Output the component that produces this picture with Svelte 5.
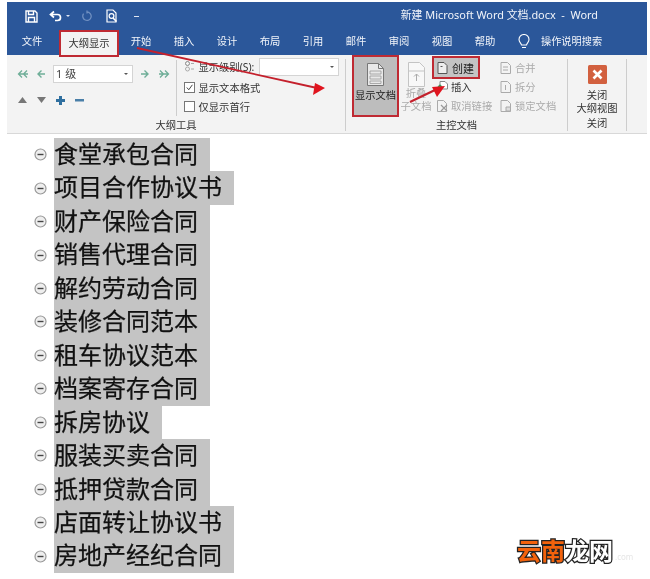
<script>
  const tabs = ['开始', '插入', '设计', '布局', '引用', '邮件', '审阅', '视图', '帮助'];
  const items = ['食堂承包合同', '项目合作协议书', '财产保险合同', '销售代理合同', '解约劳动合同', '装修合同范本', '租车协议范本', '档案寄存合同', '拆房协议', '服装买卖合同', '抵押贷款合同', '店面转让协议书', '房地产经纪合同'];
</script>

<div class="page">
  <header class="head">
    <div class="titlebar">
      <div class="qat">
        <svg class="i-save" viewBox="0 0 13 13"><path d="M1 1h9l2 2v9H1z M3.500 1v3.500h5V1 M3.500 12V7.500h6V12" fill="none" stroke="#fff" stroke-width="1.400"/></svg>
        <svg class="i-undo" viewBox="0 0 14 12"><path d="M5 1.500 1.500 4.500 5 7.500 M2 4.500h6.500a3 3 0 0 1 0 6H6" fill="none" stroke="#fff" stroke-width="1.700"/></svg>
        <span class="drop"></span>
        <svg class="i-redo" viewBox="0 0 11 12"><path d="M6 2a4.200 4.200 0 1 1-3.400 1.700M6 .5v3" fill="none" stroke="#6f8fc0" stroke-width="1.300"/></svg>
        <svg class="i-prev" viewBox="0 0 12 14"><path d="M1 1h6l3 3v9H1z" fill="none" stroke="#fff" stroke-width="1.200"/><circle cx="5.500" cy="7" r="2.400" fill="none" stroke="#fff" stroke-width="1.200"/><path d="M7 9l3.500 3.500" stroke="#fff" stroke-width="1.600"/></svg>
        <span class="more"></span>
      </div>
      <div class="doc">新建 Microsoft Word 文档.docx&nbsp; - &nbsp;Word</div>
    </div>
    <nav class="tabs">
      <span class="tab">文件</span>
      <span class="tab-active">大纲显示</span>
      {#each tabs as t}<span class="tab">{t}</span>{/each}
      <svg class="bulb" viewBox="0 0 12 16"><path d="M3.500 11C3 9 1 8.200 1 5.500a5 5 0 0 1 10 0C11 8.200 9 9 8.500 11zM4 13.500h4" fill="none" stroke="#fff" stroke-width="1.100"/></svg>
      <span class="search">操作说明搜索</span>
    </nav>
  </header>

  <section class="ribbon">
    <div class="group g-outline">
      <div class="body">
        <div class="ol-left">
          <div class="ol-row">
            <svg class="a-dbl" viewBox="0 0 12 8"><path d="M5 .5 1.500 4 5 7.500M10 .5 6.500 4l3.500 3.500M2 4h9" fill="none" stroke="#6fae98" stroke-width="1.300"/></svg>
            <svg class="a-one" viewBox="0 0 8 8"><path d="M4.500 .5 1 4l3.500 3.500M1.500 4H8" fill="none" stroke="#6fae98" stroke-width="1.400"/></svg>
            <div class="select"><span>1 级</span><i class="caret"></i></div>
            <svg class="a-one" viewBox="0 0 8 8"><path d="M3.500 .5 7 4 3.500 7.500M6.500 4H0" fill="none" stroke="#6fae98" stroke-width="1.400"/></svg>
            <svg class="a-dbl" viewBox="0 0 12 8"><path d="M2 .5 5.500 4 2 7.500M7 .5 10.500 4 7 7.500M1 4h9" fill="none" stroke="#6fae98" stroke-width="1.300"/></svg>
          </div>
          <div class="ol-row second">
            <svg class="tri" viewBox="0 0 9 6"><path d="M4.500 0 9 6H0z" fill="#777"/></svg>
            <svg class="tri" viewBox="0 0 9 6"><path d="M0 0h9L4.500 6z" fill="#777"/></svg>
            <svg class="tri-plus" viewBox="0 0 9 9"><path d="M3 0h3v3h3v3H6v3H3V6H0V3h3z" fill="#2f6f9f"/></svg>
            <svg class="tri-plus" viewBox="0 0 9 9"><path d="M0 3h9v2.500H0z" fill="#4a7fa8"/></svg>
          </div>
        </div>
        <div class="ol-right">
          <div class="opt first">
            <svg class="radio" viewBox="0 0 11 11"><circle cx="3.500" cy="2.500" r="2" fill="none" stroke="#888"/><circle cx="3.500" cy="8" r="2" fill="none" stroke="#aaa"/><path d="M7 2.500h3M7 8h3" stroke="#aaa"/></svg>
            <span>显示级别(S):</span>
            <div class="combo"><i class="caret"></i></div>
          </div>
          <div class="opt">
            <span class="check on"><svg viewBox="0 0 10 10"><path d="M2 5l2.200 2.500L8.200 2" fill="none" stroke="#444" stroke-width="1.100"/></svg></span>
            <span>显示文本格式</span>
          </div>
          <div class="opt"><span class="check"></span><span>仅显示首行</span></div>
        </div>
      </div>
      <div class="label">大纲工具</div>
    </div>

    <div class="group g-master">
      <div class="body">
        <div class="big-btn">
          <svg viewBox="0 0 17 23"><path d="M.5.500h11l5 5v17H.5z" fill="#e8e8e8" stroke="#777"/><path d="M11.500.500v5h5" fill="none" stroke="#777"/><path d="M3 8h11v3H3zM3 13h11v3H3zM3 18h11v2.500H3z" fill="none" stroke="#999" stroke-width=".8"/></svg>
          <span>显示文档</span>
        </div>
        <div class="fold-btn">
          <svg viewBox="0 0 17 25"><path d="M.5.500h11l5 5v19H.5z" fill="#f8f8f8" stroke="#c4c4c4"/><path d="M.5 9h16" stroke="#c4c4c4"/><path d="M8.500 19v-7M6 14.500l2.500-2.500 2.500 2.500" fill="none" stroke="#aaa"/></svg>
          <span>折叠<br />子文档</span>
        </div>
        <div class="col-a">
          <div class="create">
            <svg class="mini" viewBox="0 0 10 12"><path d="M.5.500h6l3 3v8h-9z M3 4.500h2" fill="#eee" stroke="#555"/></svg>
            <span>创建</span>
          </div>
          <div class="mrow">
            <svg class="mini" viewBox="0 0 11 12"><path d="M3 .5h5l2.500 2.500v5H3z" fill="#fff" stroke="#888"/><path d="M3 9v-5M1 6l2-2 2 2" fill="none" stroke="#3a9a5a" stroke-width="1.200"/></svg>
            <span>插入</span>
          </div>
          <div class="mrow off">
            <svg class="mini" viewBox="0 0 11 12"><path d="M.5.500h6l3 3v8h-9z" fill="none" stroke="#aaa"/><path d="M4 5l6 6M10 5l-6 6" stroke="#999" stroke-width="1.200"/></svg>
            <span>取消链接</span>
          </div>
        </div>
        <div class="col-b">
          <div class="mrow off">
            <svg class="mini" viewBox="0 0 11 12"><path d="M1 .5h6.500l3 3v8H1zM3 5h5M3 8h5" fill="none" stroke="#aaa"/></svg><span>合并</span>
          </div>
          <div class="mrow off">
            <svg class="mini" viewBox="0 0 11 12"><path d="M1 .5h6.500l3 3v8H1zM5.500 4v5" fill="none" stroke="#aaa"/></svg><span>拆分</span>
          </div>
          <div class="mrow off">
            <svg class="mini" viewBox="0 0 11 12"><path d="M1 .5h6.500l3 3v8H1z" fill="none" stroke="#aaa"/><path d="M6 7h4.500v4H6z" fill="#ddd" stroke="#aaa"/></svg><span>锁定文档</span>
          </div>
        </div>
      </div>
      <div class="label">主控文档</div>
    </div>

    <div class="group g-close">
      <div class="body close-body">
        <svg class="x" viewBox="0 0 19 19"><rect width="19" height="19" rx="1.500" fill="#d2603f"/><path d="M5.500 5.500l8 8M13.500 5.500l-8 8" stroke="#fff" stroke-width="2.600"/></svg>
        <span>关闭<br />大纲视图</span>
      </div>
      <div class="label">关闭</div>
    </div>
  </section>

  <ul class="list">
    {#each items as item}
      <li>
        <svg class="bullet" viewBox="0 0 13 13"><circle cx="6.500" cy="6.500" r="5.500" fill="#eee" stroke="#999" stroke-width="1.200"/><path d="M3.500 6.500h6" stroke="#444" stroke-width="1.400"/></svg>
        <span class="hl">{item}</span>
      </li>
    {/each}
  </ul>

  <svg class="marks" viewBox="0 0 650 579">
    <path d="M137 48 317 88" stroke="#c4202c" stroke-width="1.800"/>
    <path d="M325 88 315 83 313 95z" fill="#e0141e"/>
    <path d="M410 102 435 90" stroke="#c4202c" stroke-width="2.200"/>
    <path d="M432 87 445 86 437 97z" fill="#e0141e"/>
  </svg>

  <div class="wm"><b class="or">云南</b><b class="wh">龙网</b><small>.com</small></div>
</div>

<style>
  :global(body) { margin: 0; background: #fff; }
  .page { position: relative; width: 650px; height: 579px; overflow: hidden; background: #fff; font-family: "Noto Sans", "Noto Sans CJK SC", sans-serif; font-size: 10.300px; color: #333; filter: blur(.35px); }
  svg { display: block; flex: none; }
  .head { margin: 2px 3px 0 7px; height: 53px; background: #2b579a; color: #f2f5fa; }
  .titlebar { display: flex; align-items: center; height: 28px; padding-left: 18px; }
  .qat { display: flex; align-items: center; }
  .i-save { width: 13px; height: 13px; }
  .i-undo { width: 14px; height: 12px; margin-left: 11px; }
  .drop { border: 2px solid transparent; border-top: 2.500px solid #dfe6f2; border-bottom: 0; margin-left: 3px; }
  .i-redo { width: 11px; height: 12px; margin-left: 11px; }
  .i-prev { width: 12px; height: 14px; margin-left: 14px; }
  .more { width: 5px; border-top: 1px solid #dfe6f2; height: 0; margin-left: 16px; }
  .doc { margin-left: auto; margin-right: 49px; margin-bottom: 4px; font-size: 10.900px; }

  .tabs { display: flex; align-items: flex-start; height: 25px; padding-left: 4px; }
  .tab { width: 42px; margin-right: 1px; height: 24px; line-height: 23px; text-align: center; white-space: nowrap; }
  .tab-active { position: relative; z-index: 2; box-sizing: border-box; width: 60px; height: 27px; line-height: 23px; margin: 0 1px 0 5px; text-align: center; color: #333; background: #f3f3f3; border: 2px solid #bf2a33; }
  .bulb { width: 12px; height: 16px; margin: 4px 0 0 11px; }
  .search { margin-left: 11px; line-height: 23px; font-size: 10.200px; }

  .ribbon { display: flex; height: 78px; margin: 0 3px 0 7px; background: #f3f3f3; border-bottom: 1px solid #d8d8d8; }
  .group { display: flex; flex-direction: column; box-sizing: border-box; border-right: 1px solid #cdcdcd; border-image: linear-gradient(transparent 5px, #cdcdcd 5px, #cdcdcd calc(100% - 3px), transparent calc(100% - 3px)) 1; }
  .body { flex: 1; display: flex; }
  .label { height: 20px; line-height: 17px; text-align: center; color: #333; }
  .g-outline { width: 339px; }
  .g-master { width: 222px; }
  .g-close { width: 59px; }

  .ol-left { box-sizing: border-box; width: 170px; height: 56px; margin-top: 5px; padding: 5px 0 0 10px; border-right: 1px solid #cdcdcd; }
  .ol-row { display: flex; align-items: center; height: 18px; }
  .second { margin-top: 8px; gap: 10px; padding-left: 1px; }
  .a-dbl { width: 12px; height: 8px; }
  .a-one { width: 8px; height: 8px; margin: 0 8px; }
  .select, .combo { position: relative; box-sizing: border-box; height: 18px; background: #fff; border: 1px solid #d4d4d4; }
  .select { width: 80px; line-height: 16px; padding-left: 2px; color: #444; font-size: 11px; }
  .ol-row .select + .a-one { margin-left: 8px; margin-right: 9px; }
  .ol-row .a-one:nth-child(2) { margin-right: 8px; }
  .tri { width: 9px; height: 6px; }
  .tri-plus { width: 9px; height: 9px; }
  .caret { position: absolute; right: 4px; top: 7px; border: 2px solid transparent; border-top: 2.500px solid #555; border-bottom: 0; }

  .ol-right { padding: 3px 0 0 7px; }
  .opt { display: flex; align-items: center; height: 19.500px; }
  .opt.first { margin-top: -1px; margin-bottom: 1px; }
  .opt > span:not(.check) { margin-left: 3.500px; }
  .radio { width: 11px; height: 11px; }
  .combo { width: 80px; margin-left: 5px; }
  .check { box-sizing: border-box; width: 11px; height: 11px; background: #fff; border: 1px solid #777; }
  .check svg { width: 9px; height: 9px; }

  .big-btn { box-sizing: border-box; width: 47px; height: 62px; margin: 0 0 0 6px; background: #bdbdbd; border: 2px solid #bf2a33; display: flex; flex-direction: column; align-items: center; white-space: nowrap; color: #222; }
  .big-btn svg { width: 17px; height: 23px; margin-top: 6px; }
  .big-btn span { margin-top: 1px; line-height: 16px; }
  .fold-btn { width: 32px; flex: none; margin-left: 1px; display: flex; flex-direction: column; align-items: center; color: #aaa; line-height: 13px; text-align: center; white-space: nowrap; }
  .fold-btn svg { width: 17px; height: 25px; margin-top: 7px; }
  .fold-btn span { margin-top: 0; }
  .col-a { width: 48px; flex: none; padding-top: 1px; }
  .create { box-sizing: border-box; display: flex; align-items: center; width: 48px; height: 23px; padding-left: 3px; background: #c4c4c4; border: 2px solid #bf2a33; color: #222; }
  .create span { margin-left: 4px; font-size: 11px; }
  .mini { width: 11px; height: 12px; }
  .mrow { display: flex; align-items: center; height: 19px; padding-left: 5px; white-space: nowrap; color: #333; }
  .mrow span { margin-left: 3px; }
  .col-a .create + .mrow { margin-top: -2px; }
  .col-b { padding: 3px 0 0 20px; }
  .col-b .mrow { padding-left: 0; }
  .col-b .mrow span { margin-left: 4px; }
  .off { color: #aaa; }

  .close-body { flex-direction: column; align-items: center; padding-top: 10px; text-align: center; line-height: 13px; white-space: nowrap; }
  .x { width: 19px; height: 19px; margin-bottom: 5px; }

  .list { list-style: none; margin: 4px 0 0; padding: 0 0 0 34px; font-family: "Noto Sans CJK SC", sans-serif; font-size: 24px; color: #111; }
  .list li { display: flex; align-items: center; height: 33.460px; }
  .bullet { width: 13px; height: 13px; margin-right: 7px; }
  .hl { display: block; height: 100%; line-height: 30.500px; padding-right: 12px; background: #c4c4c4; white-space: nowrap; -webkit-text-stroke: .25px #111; }

  .marks { position: absolute; inset: 0; width: 650px; height: 579px; pointer-events: none; z-index: 3; }

  .wm { position: absolute; z-index: 4; left: 517px; top: 534px; font-family: "Noto Sans CJK SC", sans-serif; font-size: 24px; line-height: 32px; white-space: nowrap; }
  .wm b { -webkit-text-stroke: 2.500px #222; paint-order: stroke fill; font-weight: 700; }
  .or { color: #f2620c; }
  .wh { color: #fff; }
  .wm small { font-size: 8px; color: #e6e6e6; margin-left: 2px; font-family: "Noto Sans", sans-serif; }
</style>
